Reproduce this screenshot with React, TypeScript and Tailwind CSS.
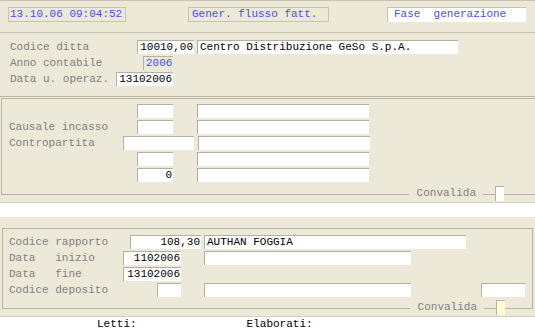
import React from "react";

const BG = "bg-[#ECE9D8]";

function Box({
  w,
  text,
  right,
  blue,
  flat,
  className = "",
}: {
  w: string;
  text?: string;
  right?: boolean;
  blue?: boolean;
  flat?: boolean;
  className?: string;
}) {
  return (
    <div
      className={`${w} h-[14px] border-t border-l border-[#b5b1a1] leading-[13px] whitespace-pre overflow-hidden ${
        flat ? "" : "bg-white"
      } ${right ? "text-right pr-px" : "pl-[2px]"} ${
        blue ? "text-[#4b4bff]" : "text-black"
      } ${className}`}
    >
      {text}
    </div>
  );
}

function Label({ w, pl, text }: { w: string; pl: string; text?: string }) {
  return (
    <div className={`${w} ${pl} shrink-0 whitespace-pre text-[#808080] leading-[14px]`}>
      {text}
    </div>
  );
}

function Convalida({ yellow, tail }: { yellow?: boolean; tail: string }) {
  return (
    <div className="flex h-[15px] items-center">
      <div className="flex-1" />
      <span className={`${BG} pl-2 pr-[7px] leading-[15px] text-[#808080]`}>
        Convalida
      </span>
      <div className="w-3" />
      <div
        className={`w-[9px] h-[15px] border-t border-l border-[#b5b1a1] ${
          yellow ? "bg-[#ffffd2]" : "bg-white"
        }`}
      />
      <div className={tail} />
    </div>
  );
}

export default function App() {
  return (
    <div
      className={`w-[535px] h-[331px] overflow-hidden ${BG} text-[11px]`}
      style={{ fontFamily: '"Liberation Mono", monospace' }}
    >
      {/* testata */}
      <div className="h-[33px] border-t border-b border-[#c7c3b3] pt-[6px] flex">
        <div className="ml-[8px] w-[118px] h-[15px] border border-[#c7c3b3] pl-px leading-[13px] text-[#4b4bff]">
          13.10.06 09:04:52
        </div>
        <div className="ml-[62px] w-[141px] h-[15px] border border-[#c7c3b3] pl-[3px] leading-[13px] text-[#4b4bff]">
          Gener. flusso fatt.
        </div>
        <div className="ml-[58px] w-[139px] h-[15px] bg-white border-t border-l border-[#c7c3b3] pl-[6px] leading-[13px] text-[#4b4bff] whitespace-pre">
          Fase  generazione
        </div>
      </div>

      {/* ditta */}
      <div className="h-[64px] border-b border-[#b9b5a5] pt-[7px] flex flex-col gap-[2px]">
        <div className="flex h-[14px]">
          <Label w="w-[137px]" pl="pl-[10px]" text="Codice ditta" />
          <Box w="w-[57px]" text="10010,00" right />
          <Box w="w-[261px]" className="ml-[3px]" text="Centro Distribuzione GeSo S.p.A." />
        </div>
        <div className="flex h-[14px]">
          <Label w="w-[143px]" pl="pl-[10px]" text="Anno contabile" />
          <Box w="w-[30px]" text="2006" blue flat />
        </div>
        <div className="flex h-[14px]">
          <Label w="w-[116px]" pl="pl-[10px]" text="Data u. operaz." />
          <Box w="w-[57px]" text="13102006" right />
        </div>
      </div>

      {/* incasso */}
      <div className="mt-px h-[97px] border-t border-l border-b border-[#b9b5a5] ml-px pt-[5px]">
        <div className="flex flex-col gap-[2px]">
          {["", "Causale incasso", "Contropartita", "", ""].map((l, i) => (
            <div key={i} className="flex h-[14px]">
              {i === 2 ? (
                <>
                  <Label w="w-[121px]" pl="pl-[7px]" text={l} />
                  <Box w="w-[71px]" />
                  <Box w="w-[172px]" className="ml-[4px]" />
                </>
              ) : (
                <>
                  <Label w="w-[135px]" pl="pl-[7px]" text={l} />
                  <Box w="w-[36px]" right text={i === 4 ? "0" : ""} />
                  <Box w="w-[172px]" className="ml-[24px]" />
                </>
              )}
            </div>
          ))}
        </div>
        <div className="mt-[4px]">
          <Convalida tail="w-[31px]" />
        </div>
      </div>

      {/* barra bianca */}
      <div className="mt-[7px] h-[15px] bg-white border-t border-[#d6d2c2]" />

      {/* rapporto */}
      <div className="mt-[11px] ml-[2px] w-[531px] h-[81px] border border-[#b9b5a5] pt-[6px]">
        <div className="flex flex-col gap-[2px]">
          <div className="flex h-[14px]">
            <Label w="w-[127px]" pl="pl-[6px]" text="Codice rapporto" />
            <Box w="w-[71px]" text="108,30" right />
            <Box w="w-[262px]" className="ml-[3px]" text="AUTHAN FOGGIA" />
          </div>
          <div className="flex h-[14px]">
            <Label w="w-[120px]" pl="pl-[6px]" text="Data   inizio" />
            <Box w="w-[58px]" text="1102006" right />
            <Box w="w-[207px]" className="ml-[23px]" />
          </div>
          <div className="flex h-[14px]">
            <Label w="w-[120px]" pl="pl-[6px]" text="Data   fine" />
            <Box w="w-[58px]" text="13102006" right />
          </div>
          <div className="flex h-[14px]">
            <Label w="w-[154px]" pl="pl-[6px]" text="Codice deposito" />
            <Box w="w-[24px]" />
            <Box w="w-[207px]" className="ml-[23px]" />
            <Box w="w-[44px]" className="ml-[70px]" />
          </div>
        </div>
        <div className="mt-[3px]">
          <Convalida yellow tail="w-[27px]" />
        </div>
      </div>

      {/* contatori */}
      <div className="mt-[7px] h-[15px] bg-white border-t border-[#d6d2c2] flex leading-[14px] text-black">
        <span className="ml-[97px]">Letti:</span>
        <span className="ml-[110px]">Elaborati:</span>
      </div>
    </div>
  );
}
